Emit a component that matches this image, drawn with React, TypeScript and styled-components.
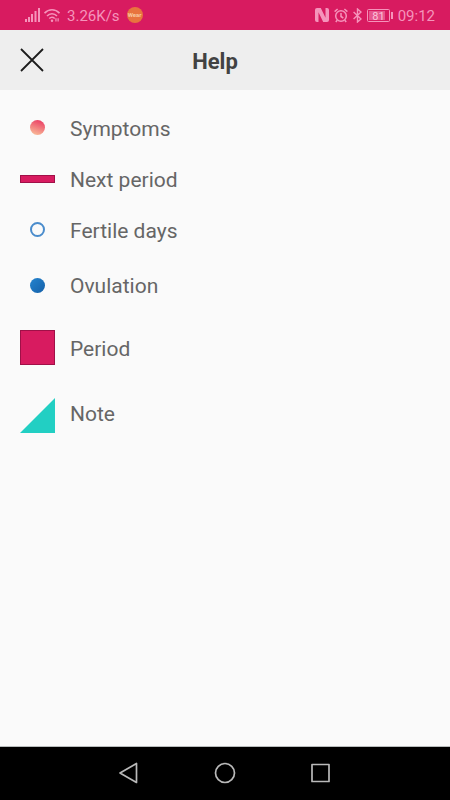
import React from "react";
import styled, { createGlobalStyle, css } from "styled-components";

const Global = createGlobalStyle`
  *, *::before, *::after { box-sizing: border-box; }
  body { margin: 0; background: #fafafa; font-family: Roboto, "Noto Sans", sans-serif; }
`;

const Screen = styled.div`
  display: flex;
  flex-direction: column;
  min-height: 100vh;
  background: #fafafa;
`;

const StatusBar = styled.div`
  display: flex;
  align-items: center;
  justify-content: space-between;
  height: 30px;
  padding: 0 15px 0 25px;
  background: #d81b60;
  color: #f594bb;
  font-size: 15px;
  line-height: 20px;
`;

const StatusGroup = styled.div<{ $gap: number }>`
  display: flex;
  align-items: center;
  gap: ${(p) => p.$gap}px;
  svg { display: block; }
`;

const Speed = styled.span`
  padding: 1px 3px 0;
`;

const Clock = styled.time`
  padding-top: 1px;
`;

const WearBadge = styled.span`
  display: flex;
  align-items: center;
  justify-content: center;
  width: 16px;
  height: 16px;
  border-radius: 50%;
  background: #e8743e;
  color: #f9c9a0;
  font-size: 6px;
  font-weight: 700;
`;

const Header = styled.header`
  display: grid;
  grid-template-columns: 64px 1fr 84px;
  align-items: center;
  height: 60px;
  background: #eeeeee;
`;

const CloseButton = styled.button`
  display: flex;
  align-items: center;
  justify-content: center;
  height: 60px;
  padding: 0;
  border: 0;
  background: none;
  cursor: pointer;
`;

const Title = styled.h1`
  margin: 0;
  padding-top: 4px;
  color: #424242;
  font-size: 22px;
  font-weight: 700;
  line-height: 28px;
  text-align: center;
`;

const Legend = styled.ul`
  flex: 1;
  margin: 0;
  padding: 12px 20px;
  list-style: none;
`;

const Row = styled.li<{ $height: number }>`
  display: grid;
  grid-template-columns: 35px 1fr;
  align-items: center;
  column-gap: 15px;
  min-height: ${(p) => p.$height}px;
`;

const Label = styled.span`
  padding-top: 2px;
  color: #666666;
  font-size: 21px;
  line-height: 28px;
`;

type DotKind = "symptom" | "fertile" | "ovulation";

const dotStyles = {
  symptom: css`background: linear-gradient(200deg, #ec4869 15%, #f9c09a 95%);`,
  fertile: css`border: 2px solid #4a8ccc;`,
  ovulation: css`background: linear-gradient(135deg, #2484cf, #1560a8);`,
};

const Dot = styled.span<{ $kind: DotKind }>`
  justify-self: center;
  width: 15px;
  height: 15px;
  border-radius: 50%;
  ${(p) => dotStyles[p.$kind]}
`;

const Block = styled.span<{ $height: number }>`
  height: ${(p) => p.$height}px;
  border: 1px solid #a01048;
  background: #d81b60;
`;

const NavBar = styled.nav`
  display: flex;
  align-items: center;
  justify-content: center;
  gap: 48px;
  height: 54px;
  padding-bottom: 1px;
  border-top: 1px solid #b8bcbc;
  background: #000;
`;

const NavButton = styled.button`
  display: flex;
  align-items: center;
  justify-content: center;
  width: 48px;
  height: 48px;
  padding: 0;
  border: 0;
  background: none;
  cursor: pointer;
`;

const Signal = () => (
  <svg width="15" height="14" viewBox="0 0 15 14" fill="currentColor" aria-hidden="true">
    <path d="M0 11h2v3H0zM3 9h2v5H3zM6 6h2v8H6zM9.5 3h2v11h-2zM13 0h2v14h-2z" />
  </svg>
);

const Wifi = () => (
  <svg width="16" height="15" viewBox="0 0 17 15" fill="none" stroke="currentColor" strokeWidth="1.7" aria-hidden="true">
    <path d="M.6 5C5 .2 12 .2 16.4 5M3.2 8c3-3.2 7.6-3.2 10.6 0M5.6 10.7c1.7-1.6 4-1.6 5.8 0" />
    <circle cx="8.5" cy="13" r="1.3" fill="currentColor" stroke="none" />
    <path d="M12.7 10.5v3.5M15 14v-3.5" strokeWidth="1.3" />
  </svg>
);

const Nfc = () => (
  <svg width="14" height="14" viewBox="0 0 14 14" aria-hidden="true">
    <rect width="14" height="14" rx="2" fill="currentColor" />
    <path d="M3.5 14V4.2L8.2 14zM10.5 0v9.8L5.8 0z" fill="#d81b60" />
  </svg>
);

const Alarm = () => (
  <svg width="14" height="15" viewBox="0 0 14 15" fill="none" stroke="currentColor" strokeWidth="1.5" aria-hidden="true">
    <circle cx="7" cy="8" r="5.3" />
    <path d="M.6 3.6L3.6 1M13.4 3.6L10.4 1M7 5v3.5l2.3 1.5M3.2 12.2l-1.4 1.8M10.8 12.2l1.4 1.8" />
  </svg>
);

const Bluetooth = () => (
  <svg width="9" height="15" viewBox="0 0 9 15" fill="none" stroke="currentColor" strokeWidth="1.4" aria-hidden="true">
    <path d="M.6 4l7.4 7-3.5 3V1L8 4 .6 11" />
  </svg>
);

const Battery = () => (
  <svg width="26" height="13" viewBox="0 0 26 13" role="img" aria-label="Battery 81%">
    <rect x=".5" y=".5" width="22" height="12" rx="1" fill="none" stroke="currentColor" />
    <rect x="2" y="2" width="16" height="9" fill="currentColor" opacity=".5" />
    <path d="M24 3h2v7h-2z" fill="currentColor" />
    <text x="11.5" y="10.5" textAnchor="middle" fontSize="11" fontFamily="Roboto, sans-serif" fill="#fbc4da">81</text>
  </svg>
);

export default function App() {
  return (
    <Screen>
      <Global />
      <StatusBar>
        <StatusGroup $gap={4}>
          <Signal />
          <Wifi />
          <Speed>3.26K/s</Speed>
          <WearBadge>Wear</WearBadge>
        </StatusGroup>
        <StatusGroup $gap={5}>
          <Nfc />
          <Alarm />
          <Bluetooth />
          <Battery />
          <Clock>09:12</Clock>
        </StatusGroup>
      </StatusBar>

      <Header>
        <CloseButton aria-label="Close">
          <svg width="24" height="24" viewBox="0 0 24 24" fill="none" stroke="#1c1c1c" strokeWidth="1.8" aria-hidden="true">
            <path d="M1 1l22 22M23 1L1 23" />
          </svg>
        </CloseButton>
        <Title>Help</Title>
      </Header>

      <Legend>
        <Row $height={51}><Dot $kind="symptom" /><Label>Symptoms</Label></Row>
        <Row $height={51}><Block $height={8} /><Label>Next period</Label></Row>
        <Row $height={51}><Dot $kind="fertile" /><Label>Fertile days</Label></Row>
        <Row $height={60}><Dot $kind="ovulation" /><Label>Ovulation</Label></Row>
        <Row $height={65}><Block $height={35} /><Label>Period</Label></Row>
        <Row $height={65}>
          <svg width="35" height="40" viewBox="0 0 35 40" aria-hidden="true">
            <path d="M35 5v35H0z" fill="#22cfc3" />
          </svg>
          <Label>Note</Label>
        </Row>
      </Legend>

      <NavBar aria-label="System">
        <NavButton aria-label="Back">
          <svg width="20" height="22" viewBox="0 0 20 22" fill="none" stroke="#b9b9b9" strokeWidth="1.7" strokeLinejoin="round" aria-hidden="true">
            <path d="M17.5 1.5v19L1 11z" />
          </svg>
        </NavButton>
        <NavButton aria-label="Home">
          <svg width="22" height="22" viewBox="0 0 22 22" fill="none" stroke="#b9b9b9" strokeWidth="1.7" aria-hidden="true">
            <circle cx="11" cy="11" r="9.5" />
          </svg>
        </NavButton>
        <NavButton aria-label="Recent apps">
          <svg width="20" height="20" viewBox="0 0 20 20" fill="none" stroke="#b9b9b9" strokeWidth="1.7" strokeLinejoin="round" aria-hidden="true">
            <rect x="1" y="1.5" width="17" height="17" />
          </svg>
        </NavButton>
      </NavBar>
    </Screen>
  );
}
